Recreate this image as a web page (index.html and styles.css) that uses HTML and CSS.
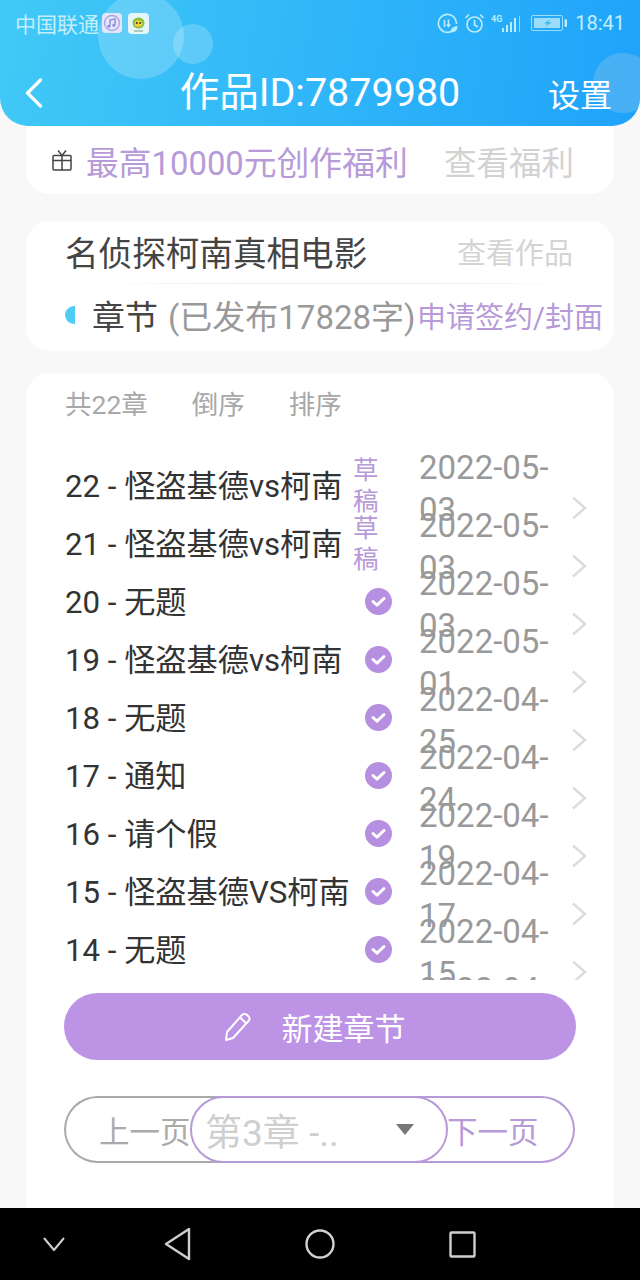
FILE: index.html
```html
<!DOCTYPE html>
<html lang="zh-CN">
<head>
  <meta charset="UTF-8" />
  <meta name="viewport" content="width=device-width, initial-scale=1" />
  <title>作品ID:7879980</title>
  <link rel="stylesheet" href="styles.css">
</head>
<body>
  <div class="screen">
    <header class="top">
      <span class="bubble bubble-big"></span>
      <span class="bubble bubble-small"></span>
      <span class="bubble bubble-right"></span>

      <div class="status">
        <div class="status-left">
          <span class="carrier">中国联通</span>
          <svg class="app-icon" width="20" height="20" viewBox="0 0 20 20">
            <rect width="20" height="20" rx="4" fill="#e4e6fb"/>
            <circle cx="10" cy="10" r="7.5" fill="none" stroke="#a9a6e8" stroke-width="1.4"/>
            <path d="M8 13V7l5-1.2V12" fill="none" stroke="#8f8bdc" stroke-width="1.4"/>
            <circle cx="6.8" cy="13.2" r="1.5" fill="#8f8bdc"/>
            <circle cx="11.8" cy="12.2" r="1.5" fill="#8f8bdc"/>
          </svg>
          <svg class="app-icon" width="21" height="21" viewBox="0 0 21 21">
            <rect width="21" height="21" rx="4" fill="#e6f6fa"/>
            <ellipse cx="10.5" cy="10" rx="6" ry="5.5" fill="#8bbf3c"/>
            <ellipse cx="10.5" cy="10.5" rx="4" ry="3.2" fill="#f0d23c"/>
            <circle cx="8.8" cy="10" r="1" fill="#333"/>
            <circle cx="12.2" cy="10" r="1" fill="#333"/>
            <rect x="6" y="17.5" width="9" height="1" fill="#7a9a80"/>
          </svg>
        </div>
        <div class="status-right">
          <svg width="21" height="21" viewBox="0 0 21 21" fill="none" stroke="#b9ecfd" stroke-width="1.6">
            <path d="M14 18.6A9 9 0 1 1 19.4 11"/>
            <path d="M7.5 7v7M11.5 6.5v7M9.8 11.5l1.7 2 1.7-2"/>
            <path d="M13.5 19.5c0-4 2.500-6 7-6.500 0 4.500-2.500 6.500-7 6.500z" fill="#b9ecfd" stroke="none"/>
          </svg>
          <svg width="21" height="21" viewBox="0 0 21 21" fill="none" stroke="#b9ecfd" stroke-width="1.7">
            <circle cx="10.500" cy="11.500" r="7.500"/>
            <path d="M10.500 7v5l3.500 2M1.500 5l3.500-3.500M19.500 5L16 1.500"/>
          </svg>
          <svg class="signal" width="30" height="20" viewBox="0 0 30 20">
            <text x="0" y="9" class="signal-text">4G</text>
            <rect x="11" y="15" width="2" height="4" fill="#b9ecfd"/>
            <rect x="15" y="12" width="2" height="7" fill="#b9ecfd"/>
            <rect x="19" y="9" width="2" height="10" fill="#b9ecfd"/>
            <rect x="23" y="5" width="2" height="14" fill="#b9ecfd"/>
            <rect x="28" y="3" width="1" height="16" fill="#8fd8f8"/>
          </svg>
          <svg class="battery" width="36" height="18" viewBox="0 0 36 18">
            <rect x="0.500" y="1.500" width="31" height="15" rx="1.500" fill="none" stroke="#9bdcf8"/>
            <rect x="3" y="4" width="26" height="10" fill="#9bdcf8"/>
            <rect x="33.500" y="5" width="2.500" height="8" rx="1" fill="#b9ecfd"/>
            <path d="M19 5.500l-6 4h4l-3 3 7-4h-4z" fill="#2db4f8"/>
          </svg>
          <span class="clock">18:41</span>
        </div>
      </div>

      <div class="titlebar">
        <svg class="back" width="18" height="30" viewBox="0 0 18 30" fill="none" stroke="#fff" stroke-width="3.200" stroke-linecap="round" stroke-linejoin="round">
          <path d="M15.500 2L2.500 15l13 13"/>
        </svg>
        <h1>作品ID:7879980</h1>
        <span class="settings">设置</span>
      </div>
    </header>

    <section class="card card-gift">
      <svg class="gift" width="20" height="22" viewBox="0 0 20 22" fill="none" stroke="#444" stroke-width="1.500">
        <rect x="1" y="6.500" width="18" height="14.500" rx="1"/>
        <path d="M1 11.500h18M10 6.500V21M10 6.500L6 1.500M10 6.500l4-5"/>
      </svg>
      <span class="gift-text">最高10000元创作福利</span>
      <span class="gift-link">查看福利</span>
    </section>

    <section class="card card-work">
      <div class="work-row">
        <span class="work-name">名侦探柯南真相电影</span>
        <span class="work-link">查看作品</span>
      </div>
      <div class="work-line"></div>
      <div class="chapter-row">
        <span class="dot"></span>
        <span class="chapter-label">章节</span>
        <span class="chapter-count">(已发布17828字)</span>
        <span class="chapter-link">申请签约/封面</span>
      </div>
    </section>

    <section class="card card-list">
      <div class="list-head">
        <span>共22章</span>
        <span>倒序</span>
        <span>排序</span>
      </div>

      <div class="list">
        <div class="row">
          <span class="row-title">22 - 怪盗基德vs柯南</span>
          <span class="row-status draft">草稿</span>
          <span class="row-date">2022-05-03</span>
          <svg class="chev" width="16" height="24" viewBox="0 0 16 24"><path d="M2 1.500L14 12 2 22.500"/></svg>
        </div>
        <div class="row">
          <span class="row-title">21 - 怪盗基德vs柯南</span>
          <span class="row-status draft">草稿</span>
          <span class="row-date">2022-05-03</span>
          <svg class="chev" width="16" height="24" viewBox="0 0 16 24"><path d="M2 1.500L14 12 2 22.500"/></svg>
        </div>
        <div class="row">
          <span class="row-title">20 - 无题</span>
          <span class="row-status"><svg class="tick" width="27" height="27" viewBox="0 0 27 27"><circle cx="13.500" cy="13.500" r="13.500"/><path d="M8 13.500l4 3.700 7-6.700"/></svg></span>
          <span class="row-date">2022-05-03</span>
          <svg class="chev" width="16" height="24" viewBox="0 0 16 24"><path d="M2 1.500L14 12 2 22.500"/></svg>
        </div>
        <div class="row">
          <span class="row-title">19 - 怪盗基德vs柯南</span>
          <span class="row-status"><svg class="tick" width="27" height="27" viewBox="0 0 27 27"><circle cx="13.500" cy="13.500" r="13.500"/><path d="M8 13.500l4 3.700 7-6.700"/></svg></span>
          <span class="row-date">2022-05-01</span>
          <svg class="chev" width="16" height="24" viewBox="0 0 16 24"><path d="M2 1.500L14 12 2 22.500"/></svg>
        </div>
        <div class="row">
          <span class="row-title">18 - 无题</span>
          <span class="row-status"><svg class="tick" width="27" height="27" viewBox="0 0 27 27"><circle cx="13.500" cy="13.500" r="13.500"/><path d="M8 13.500l4 3.700 7-6.700"/></svg></span>
          <span class="row-date">2022-04-25</span>
          <svg class="chev" width="16" height="24" viewBox="0 0 16 24"><path d="M2 1.500L14 12 2 22.500"/></svg>
        </div>
        <div class="row">
          <span class="row-title">17 - 通知</span>
          <span class="row-status"><svg class="tick" width="27" height="27" viewBox="0 0 27 27"><circle cx="13.500" cy="13.500" r="13.500"/><path d="M8 13.500l4 3.700 7-6.700"/></svg></span>
          <span class="row-date">2022-04-24</span>
          <svg class="chev" width="16" height="24" viewBox="0 0 16 24"><path d="M2 1.500L14 12 2 22.500"/></svg>
        </div>
        <div class="row">
          <span class="row-title">16 - 请个假</span>
          <span class="row-status"><svg class="tick" width="27" height="27" viewBox="0 0 27 27"><circle cx="13.500" cy="13.500" r="13.500"/><path d="M8 13.500l4 3.700 7-6.700"/></svg></span>
          <span class="row-date">2022-04-19</span>
          <svg class="chev" width="16" height="24" viewBox="0 0 16 24"><path d="M2 1.500L14 12 2 22.500"/></svg>
        </div>
        <div class="row">
          <span class="row-title">15 - 怪盗基德VS柯南</span>
          <span class="row-status"><svg class="tick" width="27" height="27" viewBox="0 0 27 27"><circle cx="13.500" cy="13.500" r="13.500"/><path d="M8 13.500l4 3.700 7-6.700"/></svg></span>
          <span class="row-date">2022-04-17</span>
          <svg class="chev" width="16" height="24" viewBox="0 0 16 24"><path d="M2 1.500L14 12 2 22.500"/></svg>
        </div>
        <div class="row">
          <span class="row-title">14 - 无题</span>
          <span class="row-status"><svg class="tick" width="27" height="27" viewBox="0 0 27 27"><circle cx="13.500" cy="13.500" r="13.500"/><path d="M8 13.500l4 3.700 7-6.700"/></svg></span>
          <span class="row-date">2022-04-15</span>
          <svg class="chev" width="16" height="24" viewBox="0 0 16 24"><path d="M2 1.500L14 12 2 22.500"/></svg>
        </div>
        <div class="row">
          <span class="row-title"></span>
          <span class="row-status"></span>
          <span class="row-date">2022-04-12</span>
        </div>
      </div>

      <button class="new-btn">
        <svg width="28" height="30" viewBox="0 0 28 30" fill="none" stroke="#fff" stroke-width="2" stroke-linejoin="round">
          <path d="M2 28l1-8L18 3c1.500-1.500 3.500-1.500 5 0l1.500 1.500c1.500 1.500 1.500 3 0 4.500L9 26z"/>
          <path d="M16 5.500l6.500 6"/>
        </svg>
        <span>新建章节</span>
      </button>

      <div class="pager">
        <span class="pager-prev">上一页</span>
        <div class="pager-select">
          <span class="pager-current">第3章 -..</span>
          <span class="caret"></span>
        </div>
        <span class="pager-next">下一页</span>
      </div>
    </section>

    <nav class="navbar">
      <svg width="24" height="16" viewBox="0 0 24 16" fill="none" stroke="#cfcfcf" stroke-width="2" stroke-linejoin="round"><path d="M2 2l10 12L22 2"/></svg>
      <svg width="28" height="34" viewBox="0 0 28 34" fill="none" stroke="#cfcfcf" stroke-width="2.400" stroke-linejoin="round"><path d="M25 2v30L2 17z"/></svg>
      <svg width="30" height="30" viewBox="0 0 30 30" fill="none" stroke="#cfcfcf" stroke-width="2.400"><circle cx="15" cy="15" r="13.500"/></svg>
      <svg width="27" height="27" viewBox="0 0 27 27" fill="none" stroke="#cfcfcf" stroke-width="2.400"><rect x="1.500" y="1.500" width="24" height="24" rx="1"/></svg>
    </nav>
  </div>
</body>
</html>
```

FILE: styles.css
```css
* {
  margin: 0; padding: 0; box-sizing: border-box;
  font-family: Roboto, 'Noto Sans CJK SC', sans-serif;
}
body {
  background: #f8f8f8;
  color: #333;
}
.screen {
  width: 640px;
  height: 1280px;
  display: flex;
  flex-direction: column;
  overflow: hidden;
}

/* header */
.top {
  height: 126px;
  flex: none;
  position: relative;
  overflow: hidden;
  background: linear-gradient(100deg, #41c9f6, #1fa3fb);
  border-radius: 0 0 28px 28px;
  color: #fff;
}
.bubble {
  position: absolute;
  border-radius: 50%;
  background: rgba(255, 255, 255, 0.2);
}
.bubble-big { left: 98px; top: -7px; width: 86px; height: 86px; }
.bubble-small { left: 173px; top: 24px; width: 40px; height: 40px; }
.bubble-right {
  left: 593px; top: 53px; width: 60px; height: 60px;
  background: rgba(120, 190, 235, 0.45);
}
.status {
  position: relative;
  height: 46px;
  padding: 0 15px 0 15px;
  display: flex;
  justify-content: space-between;
  align-items: center;
}
.status-left, .status-right { display: flex; align-items: center; }
.carrier { font-size: 21px; color: #c3effd; }
.app-icon { margin-left: 3px; }
.app-icon + .app-icon { margin-left: 6px; }
.status-right { gap: 6px; }
.signal-text { font-size: 9px; font-weight: 700; fill: #b9ecfd; }
.battery { margin-left: 4px; }
.clock { font-size: 20px; color: #c3effd; margin-left: 2px; }
.titlebar {
  position: relative;
  height: 94px;
  padding: 0 28px 0 25px;
  display: flex;
  justify-content: space-between;
  align-items: center;
}
.titlebar h1 { font-size: 39.500px; font-weight: 400; line-height: 1; }
.settings { font-size: 32px; }
.back { margin-right: 49px; }

/* cards */
.card {
  flex: none;
  margin: 0 26px;
  background: #fff;
  border-radius: 24px;
}
.card-gift {
  height: 68px;
  border-radius: 0 0 24px 24px;
  padding: 0 40px 0 26px;
  display: flex;
  align-items: center;
}
.gift { margin-right: 14px; }
.gift-text { font-size: 32.800px; color: #b79ad8; }
.gift-link { font-size: 32.500px; color: #d2d2d2; margin-left: auto; }
.card-work { height: 130px; margin-top: 27px; }
.work-row {
  height: 62px;
  padding: 0 41px 2px 39px;
  display: flex;
  justify-content: space-between;
  align-items: center;
}
.work-name { font-size: 33.600px; color: #444; }
.work-link { font-size: 29px; color: #d4d4d4; }
.work-line {
  height: 1px;
  margin: 0 40px 0 68px;
  background: linear-gradient(90deg, #fff, #ececec 30%, #ececec 70%, #fff);
}
.chapter-row {
  height: 67px;
  padding: 0 11px 5px 39px;
  display: flex;
  align-items: center;
}
.dot {
  width: 10px;
  height: 18px;
  background: #4fcdf5;
  border-radius: 10px 0 0 10px;
  margin-right: 17px;
}
.chapter-label { font-size: 33px; color: #444; margin-right: 10px; }
.chapter-count { font-size: 33px; color: #999; }
.chapter-link { font-size: 29px; color: #b79ad8; margin-left: auto; }

/* chapter list */
.card-list {
  flex: 1;
  min-height: 0;
  margin-top: 22px;
  overflow: hidden;
  padding: 17px 38px 0;
  border-radius: 24px 24px 0 0;
}
.list-head {
  display: flex;
  gap: 44px;
  padding-left: 1px;
  font-size: 26.500px;
  line-height: 30px;
  color: #a8a8a8;
}
.list {
  height: 540px;
  margin: 20px -38px 0 0;
  padding-top: 17px;
  overflow: hidden;
}
.row {
  height: 58px;
  display: flex;
  align-items: center;
  padding-left: 1px;
}
.row-title {
  width: 289px;
  flex: none;
  font-size: 31.200px;
  color: #333;
  white-space: nowrap;
  padding-bottom: 6px;
}
.row-status {
  width: 38px;
  flex: none;
  display: flex;
  justify-content: flex-end;
  padding-bottom: 2px;
}
.draft {
  display: block;
  font-size: 25.500px;
  line-height: 31px;
  color: #b79ad8;
  padding: 0 13px 0 0;
  margin: 0 1px 0 -1px;
}
.tick { display: block; }
.tick circle { fill: #b78fe0; }
.tick path { fill: none; stroke: #fff; stroke-width: 3; stroke-linecap: round; stroke-linejoin: round; }
.row-date {
  width: 142px;
  flex: none;
  margin-left: 27px;
  padding-top: 5px;
  font-size: 33px;
  line-height: 42px;
  color: #999;
}
.chev {
  flex: none;
  align-self: flex-end;
  margin: 0 0 -5px 10px;
  fill: none;
  stroke: #dcdcdc;
  stroke-width: 2.500;
}
.new-btn {
  width: 512px;
  height: 67px;
  margin-top: 13px;
  border: none;
  border-radius: 34px;
  background: #bd93e6;
  color: #fff;
  font-size: 31px;
  display: flex;
  align-items: center;
  justify-content: center;
  gap: 30px;
  padding-right: 11px;
}
.pager {
  width: 511px;
  height: 67px;
  margin-top: 36px;
  display: flex;
  align-items: stretch;
  font-size: 30.500px;
}
.pager-prev, .pager-next {
  flex: none;
  width: 166px;
  display: flex;
  align-items: center;
  white-space: nowrap;
}
.pager-prev {
  color: #aaa;
  border: 2px solid #aaa;
  border-right: none;
  border-radius: 34px 0 0 34px;
  padding-left: 33px;
}
.pager-next {
  width: 167px;
  color: #b79ad8;
  border: 2px solid #b79ad8;
  border-left: none;
  border-radius: 0 34px 34px 0;
  padding-left: 39px;
}
.pager-select {
  position: relative;
  flex: none;
  width: 258px;
  margin: 0 -40px;
  background: #fff;
  border: 2px solid #b79ad8;
  border-radius: 34px;
  padding: 0 32px 0 13px;
  display: flex;
  align-items: center;
  justify-content: space-between;
}
.pager-current { font-size: 37px; color: #cfcfcf; white-space: nowrap; }
.caret {
  width: 0;
  height: 0;
  border-left: 9px solid transparent;
  border-right: 9px solid transparent;
  border-top: 11px solid #777;
}

/* android nav */
.navbar {
  height: 72px;
  flex: none;
  background: #000;
  display: grid;
  grid-template-columns: 107px 142px 142px 142px;
  justify-items: center;
  align-items: center;
}
```
